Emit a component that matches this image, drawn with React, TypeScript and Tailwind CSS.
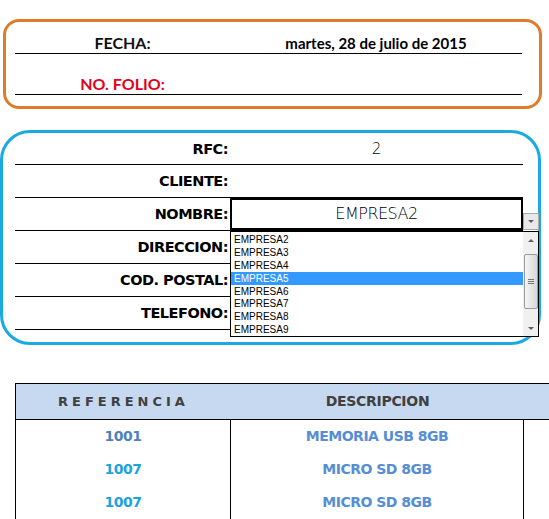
import React from 'react';

const label = "font-['DejaVu_Sans',sans-serif] font-bold text-[14.5px] text-black tracking-[-0.5px]";

const clientRows = [
  { name: 'RFC:', value: '2' },
  { name: 'CLIENTE:', value: '' },
  { name: 'NOMBRE:', value: null },
  { name: 'DIRECCION:', value: '' },
  { name: 'COD. POSTAL:', value: '' },
  { name: 'TELEFONO:', value: '' },
];

const empresas = ['EMPRESA2', 'EMPRESA3', 'EMPRESA4', 'EMPRESA5', 'EMPRESA6', 'EMPRESA7', 'EMPRESA8', 'EMPRESA9'];

const items = [
  { ref: '1001', refColor: 'text-[#4f81bd]', desc: 'MEMORIA USB 8GB' },
  { ref: '1007', refColor: 'text-[#1ea3dc]', desc: 'MICRO SD 8GB' },
  { ref: '1007', refColor: 'text-[#1ea3dc]', desc: 'MICRO SD 8GB' },
];

function Combo() {
  return (
    <div className="relative h-full w-[293px] border-2 border-black flex items-center justify-center">
      <span className="font-['DejaVu_Sans',sans-serif] font-light text-[16px] text-black tracking-[-0.5px]">EMPRESA2</span>
      {/* dropdown arrow button */}
      <div className="absolute left-[291px] top-[13px] w-[16px] h-[17px] bg-[#e9e9eb] border border-[#a9a9a9] flex items-center justify-center">
        <div className="w-0 h-0 border-l-[3px] border-r-[3px] border-t-[3px] border-l-transparent border-r-transparent border-t-[#606060]" />
      </div>
      {/* open list */}
      <div className="absolute left-[-2px] top-[31px] w-[309px] h-[106px] bg-white border border-black flex z-10">
        <div className="flex-1 pt-[1px]">
          {empresas.map(e => (
            <div key={e} className={`h-[12.9px] leading-[13px] pl-[3px] font-['Liberation_Sans',sans-serif] text-[10px] ${e === 'EMPRESA5' ? 'bg-[#3399ff] text-white' : 'text-black'}`}>{e}</div>
          ))}
        </div>
        <div className="w-[15px] bg-[#f0f0f0] flex flex-col items-center">
          <div className="h-[16px] flex items-center justify-center">
            <div className="w-0 h-0 border-l-[3px] border-r-[3px] border-b-[3px] border-l-transparent border-r-transparent border-b-[#606060]" />
          </div>
          <div className="mt-[6px] w-[14px] h-[55px] rounded-[2px] border border-[#9a9a9a] bg-gradient-to-r from-[#f4f4f4] to-[#d8d8d8] flex flex-col items-center justify-center gap-[1px]">
            <div className="w-[6px] h-px bg-[#777]" />
            <div className="w-[6px] h-px bg-[#777]" />
            <div className="w-[6px] h-px bg-[#777]" />
          </div>
          <div className="flex-1" />
          <div className="h-[16px] flex items-center justify-center">
            <div className="w-0 h-0 border-l-[3px] border-r-[3px] border-t-[3px] border-l-transparent border-r-transparent border-t-[#606060]" />
          </div>
        </div>
      </div>
    </div>
  );
}

export default function App() {
  return (
    <div className="w-[549px] h-[519px] bg-white overflow-hidden flex flex-col">
      {/* Fecha / folio */}
      <div className="mt-[19px] ml-[3px] w-[539px] h-[90px] border-[3px] border-[#e07b2a] rounded-[16px] pl-[9px] pr-[17px] flex flex-col">
        <div className="h-[32px] border-b border-black flex items-end">
          <div className="w-[215px] text-center font-['Lato',sans-serif] font-bold text-[16px] leading-[20px] text-[#111]">FECHA:</div>
          <div className="flex-1 text-center font-['Lato',sans-serif] font-bold text-[15px] leading-[20px] text-black">martes, 28 de julio de 2015</div>
        </div>
        <div className="h-[41px] border-b border-black flex items-end">
          <div className="w-[215px] text-center font-['Lato',sans-serif] font-bold text-[16px] leading-[20px] text-[#e3001b]">NO. FOLIO:</div>
        </div>
      </div>

      {/* Cliente */}
      <div className="mt-[21px] w-[541px] h-[215px] border-[3px] border-[#1ba9e1] rounded-[30px] pl-[12px] pr-[15px] flex flex-col">
        {clientRows.map((r, i) => (
          <div key={r.name} className={`${i === 0 ? 'h-[32px]' : 'h-[33px]'} border-b border-black flex items-center`}>
            <div className={`w-[215px] text-right pr-[2px] pt-[2px] ${label}`}>{r.name}</div>
            {r.value === null ? (
              <div className="h-full"><Combo /></div>
            ) : (
              <div className="flex-1 pt-[2px] text-center font-['DejaVu_Sans',sans-serif] font-light text-[15px] text-black">{r.value}</div>
            )}
          </div>
        ))}
      </div>

      {/* Tabla */}
      <div className="mt-[38px] ml-[15px] w-[560px] border-t border-l border-black">
        <div className="h-[36px] bg-[#c6d9f1] border-b border-black flex items-center">
          <div className="w-[215px] text-center font-['DejaVu_Sans',sans-serif] font-bold text-[13px] text-[#404040] tracking-[4px]">REFERENCIA</div>
          <div className="w-[293px] text-center font-['DejaVu_Sans',sans-serif] font-bold text-[14px] text-[#404040] tracking-[-0.3px]">DESCRIPCION</div>
        </div>
        {items.map((it, i) => (
          <div key={i} className="h-[33px] flex">
            <div className={`w-[215px] flex items-center justify-center border-r border-black font-['DejaVu_Sans',sans-serif] font-bold text-[14px] tracking-[-0.5px] ${it.refColor}`}>{it.ref}</div>
            <div className="w-[293px] flex items-center justify-center border-r border-black font-['DejaVu_Sans',sans-serif] font-bold text-[14px] tracking-[-0.5px] text-[#558ed5]">{it.desc}</div>
            <div className="flex-1" />
          </div>
        ))}
      </div>
    </div>
  );
}
